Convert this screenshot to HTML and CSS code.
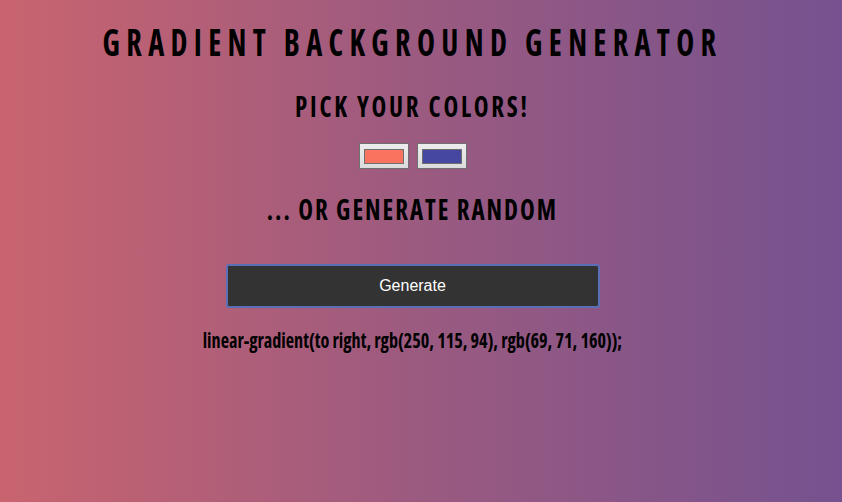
FILE: index.html
```html
<!DOCTYPE html>
<html>
<head>
<meta charset="utf-8">
<link rel="stylesheet" href="styles.css">
</head>
<body>
<main class="page">
  <h1 class="title">Gradient Background Generator</h1>
  <h2 class="subtitle">Pick your colors!</h2>
  <div class="pickers">
    <input class="picker" type="color" value="#fa735e">
    <input class="picker" type="color" value="#4547a0">
  </div>
  <h2 class="subtitle random">... or generate random</h2>
  <button class="generate" type="button">Generate</button>
  <p class="css-output">linear-gradient(to right, rgb(250, 115, 94), rgb(69, 71, 160));</p>
</main>
</body>
</html>
```
FILE: styles.css
```css
html, body {
  margin: 0;
  height: 100%;
}
body {
  background: linear-gradient(to right, #c9646f, #9b5a80 50%, #75528f);
  font-family: "Open Sans", sans-serif;
  font-stretch: 75%;
  color: #000;
}
.page {
  width: 825px;
  display: flex;
  flex-direction: column;
  align-items: center;
}
.title {
  margin: 21px 0 0;
  font-size: 38px;
  font-weight: 700;
  text-transform: uppercase;
  letter-spacing: 7.9px;
  line-height: 40px;
  white-space: nowrap;
  transform: scaleX(0.8);
}
.subtitle {
  margin: 29px 0 0;
  font-size: 29px;
  font-weight: 700;
  text-transform: uppercase;
  letter-spacing: 3.2px;
  line-height: 32px;
  white-space: nowrap;
  transform: scaleX(0.86);
}
.pickers {
  margin-top: 21px;
  display: flex;
  gap: 8px;
}
.picker {
  -webkit-appearance: none;
  appearance: none;
  box-sizing: border-box;
  width: 50px;
  height: 26px;
  margin: 0;
  padding: 0;
  border: 1px solid #6f6f6f;
  background: linear-gradient(#ececec, #dcdcdc);
  border-radius: 0;
}
.picker::-webkit-color-swatch-wrapper {
  padding: 5px 4px 4px;
}
.picker::-webkit-color-swatch {
  border: 1px solid #6f6f6f;
  border-radius: 0;
}
.random {
  margin-top: 24px;
  letter-spacing: 2.3px;
}
.generate {
  margin-top: 39px;
  box-sizing: border-box;
  width: 374px;
  height: 44px;
  background: #333;
  color: #fff;
  border: 2px solid #5a6fb6;
  border-radius: 3px;
  font-family: "Liberation Sans", Arial, sans-serif;
  font-stretch: normal;
  font-size: 16px;
}
.css-output {
  margin: 20px 0 0;
  font-size: 21px;
  font-weight: 700;
  line-height: 24px;
  white-space: nowrap;
  transform: scaleX(0.865);
}
```
